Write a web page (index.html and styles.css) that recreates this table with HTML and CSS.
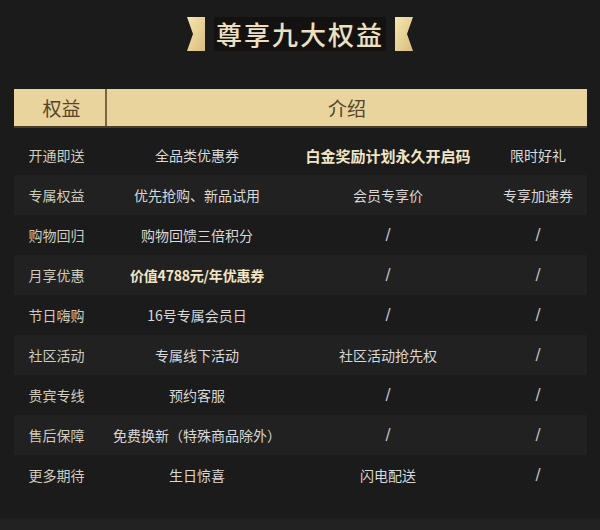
FILE: index.html
```html
<!DOCTYPE html>
<html lang="zh">
<head>
<meta charset="utf-8">
<link rel="stylesheet" href="styles.css">
</head>
<body>
<div class="page">
  <div class="title">
    <svg class="ribbon" width="18" height="34" viewBox="0 0 18 34"><defs><linearGradient id="g1" x1="0" y1="0" x2="1" y2="1"><stop offset="0" stop-color="#f6e7b0"/><stop offset="1" stop-color="#d9bd7c"/></linearGradient></defs><polygon points="0,0 18,0 18,34 0,34 6,17" fill="url(#g1)"/></svg>
    <h1>尊享九大权益</h1>
    <svg class="ribbon" width="18" height="34" viewBox="0 0 18 34"><polygon points="0,0 18,0 12,17 18,34 0,34" fill="url(#g1)"/></svg>
  </div>
  <div class="table">
    <div class="head">
      <div class="hcell first">权益</div>
      <div class="hcell span">介绍</div>
    </div>
    <div class="row"><div class="c1">开通即送</div><div>全品类优惠券</div><div class="strong big">白金奖励计划永久开启码</div><div>限时好礼</div></div>
    <div class="row alt"><div class="c1">专属权益</div><div>优先抢购、新品试用</div><div>会员专享价</div><div>专享加速券</div></div>
    <div class="row"><div class="c1">购物回归</div><div>购物回馈三倍积分</div><div class="sl">/</div><div class="sl">/</div></div>
    <div class="row alt"><div class="c1">月享优惠</div><div class="strong">价值4788元/年优惠券</div><div class="sl">/</div><div class="sl">/</div></div>
    <div class="row"><div class="c1">节日嗨购</div><div>16号专属会员日</div><div class="sl">/</div><div class="sl">/</div></div>
    <div class="row alt"><div class="c1">社区活动</div><div>专属线下活动</div><div>社区活动抢先权</div><div class="sl">/</div></div>
    <div class="row"><div class="c1">贵宾专线</div><div>预约客服</div><div class="sl">/</div><div class="sl">/</div></div>
    <div class="row alt"><div class="c1">售后保障</div><div>免费换新（特殊商品除外）</div><div class="sl">/</div><div class="sl">/</div></div>
    <div class="row"><div class="c1">更多期待</div><div>生日惊喜</div><div>闪电配送</div><div class="sl">/</div></div>
  </div>
</div>
</body>
</html>
```
FILE: styles.css
```css
* { box-sizing: border-box; }
html, body {
  margin: 0;
  padding: 0;
  background: #1b1b1b;
  font-family: "Noto Sans CJK SC", "Noto Sans", sans-serif;
}
.page {
  width: 600px;
  height: 530px;
  padding-top: 17px;
  background: linear-gradient(#1b1b1b 0, #1b1b1b 518px, #222 520px);
}
.title {
  display: flex;
  justify-content: center;
  align-items: center;
  gap: 9px;
  height: 34px;
}
.title h1 {
  margin: 0;
  padding: 0 2px;
  font-size: 26px;
  font-weight: 500;
  letter-spacing: 2px;
  line-height: 34px;
  color: #ece0c2;
  background: #141210;
}
.table {
  margin: 38px 13px 0 14px;
}
.head {
  display: grid;
  grid-template-columns: 93px 1fr;
  height: 39px;
  background: #e9d49d;
  border-bottom: 2px solid #4a3e28;
  margin-bottom: 7px;
}
.hcell {
  display: flex;
  align-items: center;
  justify-content: center;
  font-size: 19px;
  color: #56452a;
}
.hcell.first {
  border-right: 2px solid #7b6640;
  padding-left: 4px;
}
.row {
  display: grid;
  grid-template-columns: 93px 180px 202px 98px;
  height: 40px;
  align-items: center;
  text-align: center;
  font-size: 14px;
  color: #d8d8d8;
}
.row.alt { background: #212121; }
.row > div { white-space: nowrap; }
.c1 { color: #cfcbbd; margin-left: -8px; }
.strong { font-weight: 700; color: #f0e5c5; letter-spacing: -0.2px; }
.strong.big { font-size: 15px; letter-spacing: 0; }
.sl { color: #c8c8c8; font-family: "DejaVu Sans", sans-serif; font-size: 15px; }
```
